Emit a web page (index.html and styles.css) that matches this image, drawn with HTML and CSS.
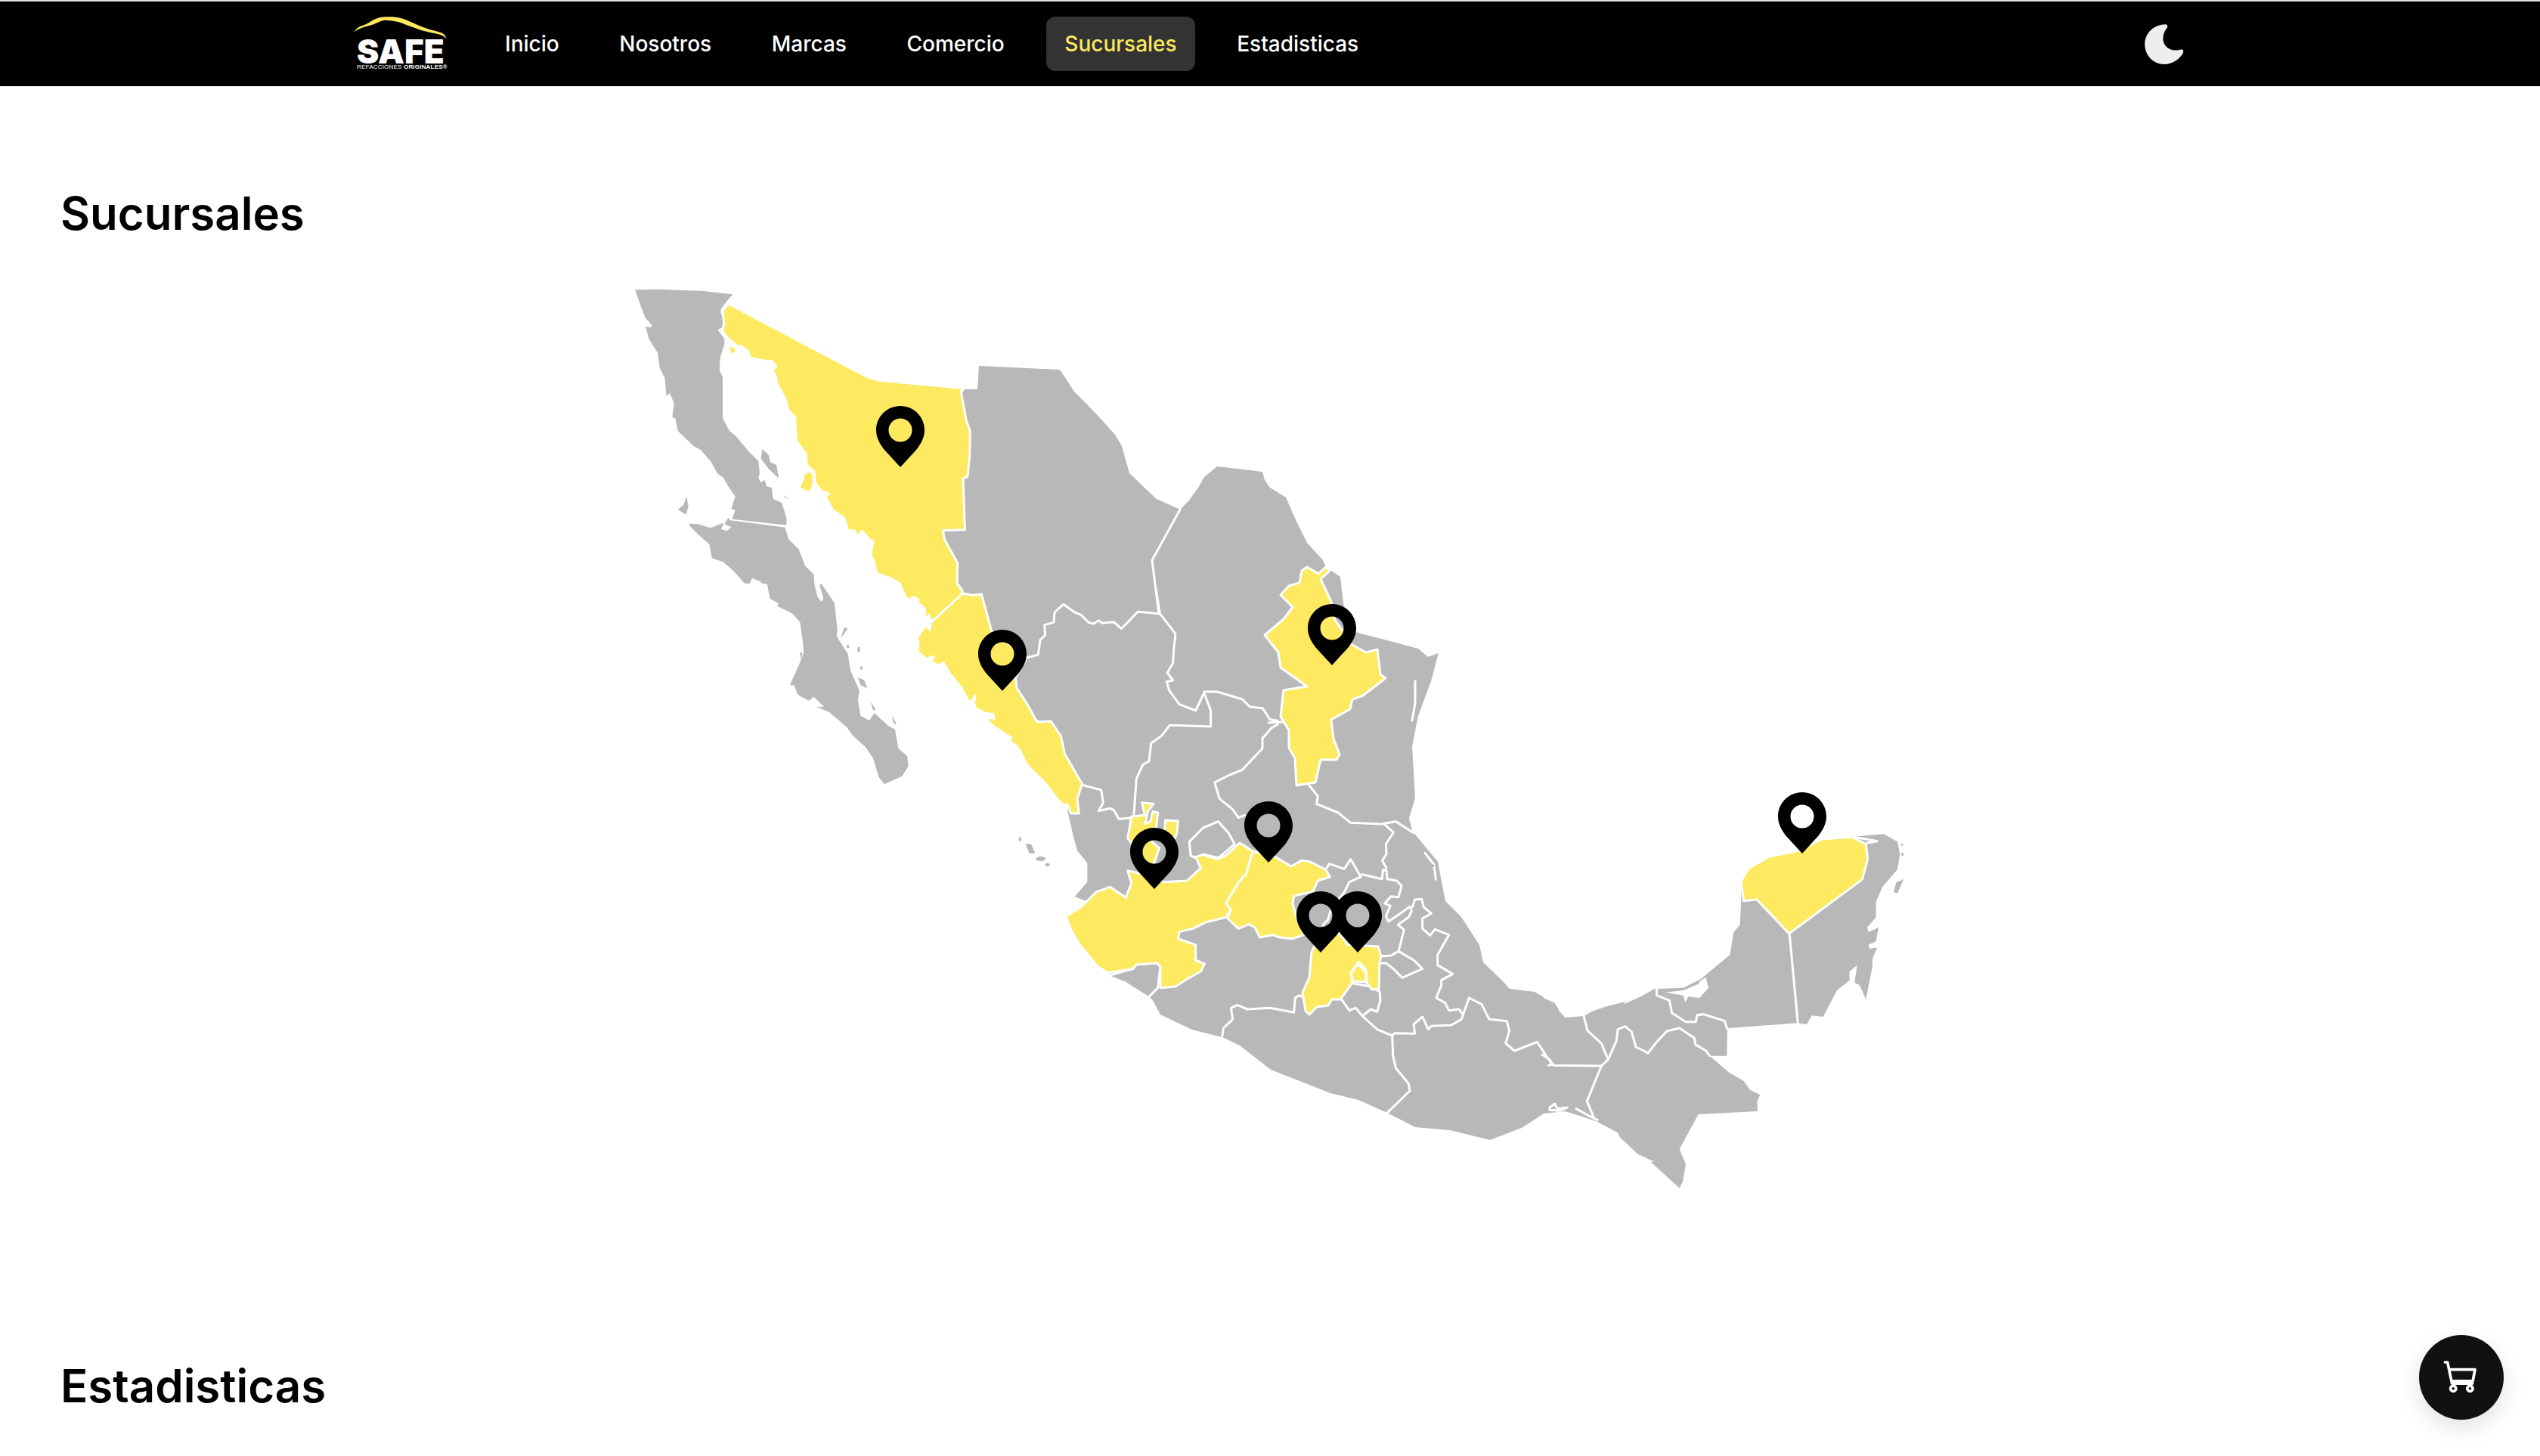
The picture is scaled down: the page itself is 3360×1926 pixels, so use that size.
FILE: index.html
```html
<!DOCTYPE html>
<html lang="es">
<head>
<meta charset="utf-8">
<title>Sucursales</title>
<link rel="stylesheet" href="styles.css">
</head>
<body>
<header class="topbar">
  <div class="brand">
    <svg class="brand-car" viewBox="50 30 380 95"><path d="M52 97C60 82 72 74 85 70C100 66 112 58 125 50C140 42 155 35 180 34C200 33 222 33 245 40C262 45 278 52 295 60C312 68 330 76 350 82C370 88 392 93 410 100C418 104 424 112 426 122C420 115 412 110 400 106C380 100 360 97 340 92C320 87 300 79 280 72C260 65 240 55 220 52C205 50 190 47 175 48C160 50 145 60 130 65C115 70 100 72 85 78C72 83 60 88 52 97Z"/></svg>
    <div class="brand-name">SAFE</div>
    <div class="brand-sub">REFACCIONES <b>ORIGINALES®</b></div>
  </div>
  <nav class="nav">
    <a class="nav-item">Inicio</a>
    <a class="nav-item">Nosotros</a>
    <a class="nav-item">Marcas</a>
    <a class="nav-item">Comercio</a>
    <a class="nav-item is-active">Sucursales</a>
    <a class="nav-item">Estadisticas</a>
  </nav>
  <svg class="moon" viewBox="172 93 156 160"><path d="M255 94C263 94 266 103 259 110C250 122 245 135 245 150C245 175 264 197 295 197C305 197 312 195 318 194C325 194 328 200 325 208C310 235 282 253 250 253C206 253 172 217 172 173C172 130 208 94 255 94Z"/></svg>
</header>

<main class="page">
  <h2 class="section-title">Sucursales</h2>
  <svg class="map" viewBox="0 319 3360 1477">
    <defs>
      <path id="pin" fill-rule="evenodd" d="M32 0C14.3 0 0 14.3 0 32C0 42 5 50 10 57L32 81L54 57C59 50 64 42 64 32C64 14.3 49.7 0 32 0ZM32 16.500A15.500 15.500 0 1 1 32 47.500A15.500 15.500 0 1 1 32 16.500Z"/>
    </defs>

    <!-- land: central mainland -->
    <g class="land">
      <path d="M1270 525L1276 515L1293 515L1295 484L1402 489L1421 518L1440 537L1459 557L1475 575L1484 590L1494 626L1516 647L1530 660L1561 674L1572 663L1585 645L1593 631L1610 617L1670 624L1673 635L1680 645L1701 658L1715 690L1729 718L1750 741L1754 750L1773 763L1777 798L1789 835L1831 846L1876 858L1889 869L1903 864L1893 901L1876 947L1868 987L1872 1056L1864 1082L1868 1099L1902 1140L1912 1192L1933 1213L1957 1250L1962 1273L1987 1297L1997 1308L2030 1312L2042 1319L2042 1473L2013 1492L1971 1508L1918 1495L1872 1491L1835 1472L1797 1455L1760 1446L1681 1415L1640 1383L1617 1372L1577 1362L1535 1342L1525 1323L1536 1300L1490 1200L1450 1100L1425 1040L1400 1000L1380 960L1340 920L1290 840L1265 790L1245 710L1255 600Z"/>
    </g>
    <!-- Baja California -->
    <g class="land" transform="translate(830 370) scale(.33333)">
      <path d="M30 40L130 38L300 45L418 58L395 85L372 115L370 130L380 160L378 190L358 198L385 235L385 255L368 310L365 360L378 385L378 550L405 600L430 620L480 680L520 720L525 770L520 785L528 805L545 795L552 820L572 825L578 870L612 885L625 925L632 950L630 974L415 950L428 915L412 910L428 860L400 820L380 785L358 770L330 720L290 675L262 660L200 600L190 550L178 545L185 490L168 450L155 462L148 390L128 350L120 290L85 235L72 185L95 190L95 178L70 150L55 110Z"/>
      <path d="M235 860L242 900L232 932L200 912L222 895Z"/>
      <path d="M535 672L560 695L568 725L592 735L600 788L560 750L530 710Z"/>
      <path d="M620 855L640 870L625 865Z"/>
    </g>
    <g class="land" transform="translate(880 650) scale(.33333)">
      <path d="M95 128L130 130L180 145L218 130L232 125L222 150L245 157L262 142L235 130L250 105L258 115L475 143L490 190L530 230L555 295L590 330L592 370L605 420L620 438L628 425L612 370L620 368L650 410L672 445L680 520L683 550L680 575L725 645L735 710L770 790L765 830L775 890L810 910L830 880L885 930L912 945L925 1020L960 1050L965 1090L940 1130L870 1162L848 1135L825 1060L795 1015L745 970L720 935L650 875L600 855L630 855L590 815L570 830L540 815L525 805L512 770L495 768L530 690L550 640L545 590L535 520L505 485L445 455L450 445L415 425L405 370L378 362L405 325L385 360L345 345L335 365L315 365L270 315L230 280L185 265L175 210L130 170L100 140Z"/>
      <path d="M710 540L724 545L697 582Z"/>
      <ellipse cx="725" cy="615" rx="5" ry="7"/>
      <ellipse cx="768" cy="627" rx="5" ry="11"/>
      <ellipse cx="778" cy="701" rx="5" ry="7"/>
      <path d="M765 738L790 750L802 782L775 768Z"/>
      <path d="M815 835L835 865L825 870Z"/>
      <path d="M900 888L918 925L905 920Z"/>
      <path d="M535 640L545 640L538 668Z"/>
    </g>
    <!-- Nayarit, the Marias islands, Colima -->
    <g class="land" transform="translate(1190 780) scale(.33333)">
      <path d="M725 775L705 830L712 888L665 870L690 980L705 1035L745 1085L745 1160L695 1218L730 1232L800 1240L900 1220L1000 1200L950 800Z"/>
      <ellipse cx="478" cy="990" rx="5" ry="9"/>
      <path d="M500 1008L522 1010L538 1045L515 1048Z"/>
      <ellipse cx="560" cy="1068" rx="20" ry="9"/>
      <ellipse cx="587" cy="1092" rx="9" ry="7"/>
    </g>
    <g class="land" transform="translate(1400 1040) scale(.33333)">
      <path d="M205 752L265 775L305 800L360 835L395 800L405 715L390 702L310 708L295 725L195 740Z"/>
      <path d="M360 835L375 850L405 905L530 965L650 995L680 900L500 700L400 720Z"/>
    </g>
    <!-- Southeast -->
    <g class="land" transform="translate(2040 1090) scale(.33333)">
      <path d="M0 688L50 710L70 745L90 768L165 762L195 745L250 725L330 705L325 715L400 680L445 655L560 650L630 615L690 565L745 520L760 430L785 400L790 300L790 230L820 175L900 130L1020 105L1110 60L1230 50L1355 40L1410 70L1420 120L1410 180L1350 250L1325 310L1325 370L1290 410L1295 430L1335 410L1325 465L1295 480L1300 495L1330 490L1312 530L1310 570L1285 695L1260 640L1240 630L1250 560L1220 585L1220 620L1170 660L1115 765L1070 760L1050 795L1015 790L735 810L733 920L665 920L740 985L800 1020L825 1055L865 1075L853 1100L855 1140L620 1152L545 1290L570 1350L558 1420L545 1445L430 1340L445 1340L380 1310L310 1245L300 1225L215 1180L140 1155L90 1140L0 1150Z"/>
      <path d="M1435 218L1410 275L1395 270L1405 232Z"/>
      <ellipse cx="1430" cy="120" rx="5" ry="6"/>
      <ellipse cx="1428" cy="82" rx="5" ry="4"/>
      <path class="cut" d="M490 668L560 680L568 708L580 685L625 690L660 650L650 608L625 625L620 635L560 660Z"/>
    </g>

    <!-- state borders -->
    <g class="borders">
      <path d="M1561 674L1524 741L1533 812"/>
      <path d="M1872 901L1872 930L1868 953"/>
      <path d="M1678 956L1696 955"/>
    </g>
    <g class="borders" transform="translate(1190 780) scale(.33333)">
      <path d="M505 270L550 258L558 200L578 180L575 140L612 130L615 90L650 58L695 90L720 100L750 130L770 135L790 122L805 133L850 128L880 155L905 130L945 88L1030 95"/>
      <path d="M1018 0L1033 95L1095 175L1088 240L1085 290L1063 330L1085 360L1060 365L1070 400L1110 455L1175 480L1210 405L1260 405L1360 435L1390 465L1440 470L1470 515L1500 520"/>
      <path d="M1210 415L1235 480L1235 543L1072 538L1040 580L998 610L990 680L965 695L940 750L930 890"/>
      <path d="M725 775L800 795L808 845L790 878L835 868L850 875L870 910L925 905"/>
      <path d="M1150 1000L1205 945L1265 920L1305 965L1330 1010L1265 1065L1205 1050L1175 1065L1155 1055Z"/>
      <path d="M1500 535L1475 550L1440 590L1440 630L1360 715L1310 735L1250 765L1270 830L1320 870L1345 905L1370 895"/>
      <path d="M1030 1025L1010 1085"/>
    </g>
    <g class="borders" transform="translate(1400 1040) scale(.33333)">
      <path d="M650 995L655 960L692 925L685 880L710 868L750 885L840 880L935 898L940 840L955 830L968 835"/>
      <path d="M360 835L395 800L405 715L390 702L310 708L295 725L205 750"/>
    </g>
    <g class="borders" transform="translate(2040 1090) scale(.33333)">
      <path d="M982 440L1015 792"/>
      <path d="M165 762L180 820L235 870L262 935L235 960L45 958L30 935L0 915"/>
      <path d="M262 935L295 860L300 815L330 803L355 825L372 885L405 900L420 910L450 870L495 822L545 810L605 850L608 875L650 900L665 920"/>
      <path d="M455 650L455 680L505 700L515 750L570 785L610 785L615 758L640 755L725 782L733 810"/>
      <path d="M235 960L178 1100L205 1165"/>
      <path d="M30 1125L50 1110L60 1130L100 1125L70 1138L30 1135Z"/>
      <path d="M135 1130L190 1160L220 1175"/>
      <path d="M1230 50L1330 68L1290 75"/>
    </g>
    <g class="borders" transform="translate(1650 1020) scale(.33333)">
      <path d="M315 385L325 368L385 388L410 350L425 375L450 420"/>
      <path d="M450 420L405 440L385 480L365 505M330 555L320 590L300 610"/>
      <path d="M455 410L535 428L538 392L552 395L555 428L592 435L612 455L600 500L570 497L545 525L568 535L550 575L560 597L600 570L645 538L652 555L640 580L598 610L622 630L600 715L570 732L530 735"/>
      <path d="M545 212L580 243L550 290L552 330L535 355L552 385"/>
      <path d="M655 540L665 510L692 508L700 540L730 565L695 585L695 625L725 652L745 628L800 650L755 730L755 770L815 805L770 830L770 850L750 900L785 920L800 950L840 945L855 965"/>
      <path d="M600 715L660 750L695 785L660 800L615 820L580 785L550 762L530 762"/>
      <path d="M422 843L490 855L525 875L528 910L515 955L490 945L457 972L430 940L405 950L375 908"/>
      <path d="M457 972L515 1025L575 1050L585 1040L665 1042L660 1005L695 975L718 1025L730 1012L810 1008L850 985L880 900L930 925L960 985L1030 992L1040 1030L1025 1080L1060 1110L1150 1075L1210 1165L1195 1168"/>
      <path d="M575 1050L578 1130L590 1180L640 1240L645 1269L555 1356"/>
      <path d="M275 130L360 165L410 205L530 210L590 200L660 245"/>
      <path d="M240 50L280 100L275 130"/>
      <path d="M705 325L740 370L748 430"/>
      <circle class="dot" cx="737" cy="375" r="4"/>
    </g>

    <!-- states with branches -->
    <g class="branch" transform="translate(830 370) scale(.33333)">
      <path d="M400 95L950 385L1000 400L1328 430L1325 450L1345 560L1360 600L1358 700L1350 780L1332 790L1338 960L1340 992L1252 995L1258 1030L1310 1125L1308 1205L1330 1235L1325 1250L1270 1315L1210 1360L1195 1330L1180 1360L1180 1305L1150 1280L1155 1270L1140 1260L1110 1270L1095 1240L1080 1205L1045 1185L990 1165L975 1110L965 1090L975 1040L955 1025L935 1000L925 1000L920 1025L898 995L875 995L860 945L815 915L785 860L800 850L765 835L745 805L740 760L712 735L708 690L670 640L665 545L640 520L625 470L592 410L590 385L575 360L590 345L570 320L560 325L485 310L480 285L450 262L440 265L405 238L378 205L383 170L378 125Z"/>
      <path d="M700 770L725 758L740 775L738 815L722 848L680 825L695 795Z"/>
      <path d="M680 850L686 855L672 862Z"/>
      <path d="M398 258L435 272L425 295L410 295Z"/>
    </g>
    <g class="branch" transform="translate(1190 780) scale(.33333)">
      <path d="M250 15L290 22L325 18L365 165L470 240L505 270L460 350L465 390L510 460L545 525L600 522L640 580L655 650L715 755L725 770L705 830L712 888L680 888L665 850L655 860L630 835L580 770L505 695L470 625L430 595L445 590L400 560L370 540L340 505L375 512L372 495L340 490L300 470L295 450L300 420L290 440L275 445L245 388L200 335L175 290L155 300L125 285L135 265L105 275L72 245L75 210L70 190L105 140L120 160L125 130Z"/>
      <path d="M920 900L972 895L962 845L1008 850L985 880L975 930L995 920L1005 880L1025 885L1018 950L1000 1000L1030 1025L1010 1085L985 1095L960 1060L905 985L912 950Z"/>
      <path d="M1055 915L1105 918L1100 970L1085 1000L1050 975Z"/>
    </g>
    <g class="branch" transform="translate(1400 1040) scale(.33333)">
      <path d="M720 225L772 258L745 350L720 375L665 465L685 490L665 520L585 540L535 565L480 578L475 605L545 630L545 690L580 705L565 735L520 760L465 795L405 800L405 715L390 702L310 708L295 725L195 740L155 715L115 665L85 630L50 570L30 515L90 480L150 420L205 400L268 442L290 385L275 335L320 345L420 380L510 375L565 325L545 280L575 272L630 290L665 275Z"/>
      <path d="M772 258L860 280L925 318L965 295L1000 300L1060 330L1078 360L1030 375L1010 418L935 435L930 465L945 520L975 590L930 605L880 600L850 590L800 600L780 560L755 548L715 565L672 525L685 490L665 465L720 375L745 350Z"/>
    </g>
    <g class="branch">
      <path d="M1729 750L1744 759L1754 750L1759 755L1747 766L1761 796L1766 820L1789 853L1807 863L1822 859L1826 892L1833 897L1803 920L1789 925L1786 938L1761 952L1764 977L1772 998L1768 1005L1747 1005L1740 1035L1726 1037L1715 1039L1713 1003L1705 989L1705 966L1694 948L1698 913L1729 908L1694 883L1691 863L1673 840L1698 819L1710 803L1698 791L1694 787L1705 775L1719 771L1722 755Z"/>
      <path d="M1738 1253L1760 1220L1778 1243L1783 1250L1823 1252L1827 1265L1825 1273L1824 1308L1815 1309L1808 1300L1807 1283L1797 1272L1787 1287L1789 1300L1773 1322L1762 1322L1757 1330L1742 1332L1732 1342L1727 1337L1723 1313L1732 1293L1735 1260Z"/>
      <path d="M1797 1275L1807 1287L1807 1299L1790 1298L1787 1287Z"/>
    </g>
    <g class="branch" transform="translate(2040 1090) scale(.33333)">
      <path d="M790 225L820 175L900 130L1020 105L1110 60L1230 52L1285 80L1292 140L1270 220L980 435L852 300L800 305L790 235Z"/>
    </g>

    <!-- pins -->
    <g class="pins">
      <use href="#pin" x="1159" y="537"/>
      <use href="#pin" x="1294" y="833"/>
      <use href="#pin" x="1730" y="799"/>
      <use href="#pin" x="1495" y="1095"/>
      <use href="#pin" x="1646" y="1060"/>
      <use href="#pin" x="1715" y="1179"/>
      <use href="#pin" x="1764" y="1179"/>
      <use href="#pin" x="2352" y="1048"/>
    </g>
  </svg>
  <h2 class="section-title">Estadisticas</h2>
</main>

<button class="cart" aria-label="Carrito">
  <svg class="cart-icon" viewBox="200 165 175 160"><path d="M222 183H232L250 268H332M240 212H342L333 258H250"/><circle cx="255" cy="288" r="11"/><circle cx="322" cy="288" r="11"/></svg>
</button>
</body>
</html>
```
FILE: styles.css
```css
* { box-sizing: border-box; }
html, body { margin: 0; padding: 0; background: #fff; }
body { font-family: Inter, "Liberation Sans", sans-serif; color: #000; }

.topbar {
  display: flex;
  align-items: center;
  height: 114px;
  padding: 0 471px 0 467px;
  background: #000;
  border-top: 2px solid #e5e5e5;
}

.brand { display: flex; flex-direction: column; width: 125px; height: 75px; color: #fff; }
.brand-car { display: block; width: 125px; height: 31px; fill: #fde95f; }
.brand-name { font-size: 44px; font-weight: 900; line-height: 32px; margin-left: 5px; }
.brand-sub { font-family: "Liberation Sans", sans-serif; font-size: 8px; line-height: 10px; white-space: nowrap; margin-left: 5px; letter-spacing: .2px; }

.nav { display: flex; gap: 31.6px; margin-left: 52px; flex: 1; }
.nav-item {
  display: flex;
  align-items: center;
  height: 72px;
  padding: 0 24px;
  border-radius: 12px;
  color: #fff;
  font-size: 28px;
  font-weight: 500;
  white-space: nowrap;
}
.nav-item.is-active { background: #333; color: #fde95f; }

.moon { display: block; width: 52px; height: 53px; fill: #eee; }

.page { display: flex; flex-direction: column; padding-top: 131px; }
.section-title { margin: 0; padding-left: 80px; font-size: 60px; font-weight: 600; line-height: 74px; }

.map { display: block; width: 3360px; height: 1477px; }
.land { fill: #b8b8b8; }
.land .cut { fill: #fff; }
.borders { fill: none; stroke: #fff; stroke-width: 3; stroke-linejoin: round; stroke-linecap: round; }
.borders path { vector-effect: non-scaling-stroke; }
.branch path { fill: #fdea60; stroke: #fff; stroke-width: 3; stroke-linejoin: round; vector-effect: non-scaling-stroke; }
.dot { fill: #4cc13a; stroke: none; }
.pins { fill: #000; }

.cart {
  position: fixed;
  right: 48px;
  bottom: 48px;
  display: flex;
  align-items: center;
  justify-content: center;
  width: 112px;
  height: 112px;
  padding: 0;
  border: 0;
  border-radius: 50%;
  background: #111;
  box-shadow: 0 10px 30px rgba(0, 0, 0, .12);
}
.cart-icon { display: block; width: 58px; height: 53px; fill: none; stroke: #fff; stroke-width: 11; stroke-linejoin: round; stroke-linecap: round; }
```
